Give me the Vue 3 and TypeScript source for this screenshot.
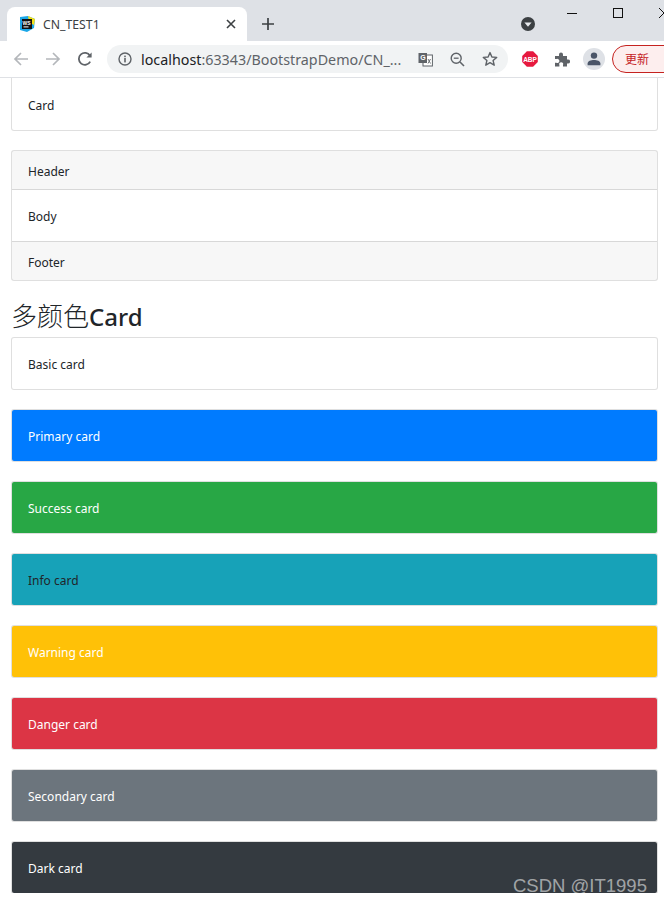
<script setup lang="ts">
const colorCards = [
  { name: 'Primary card', cls: 'primary' },
  { name: 'Success card', cls: 'success' },
  { name: 'Info card', cls: 'info' },
  { name: 'Warning card', cls: 'warning' },
  { name: 'Danger card', cls: 'danger' },
  { name: 'Secondary card', cls: 'secondary' },
  { name: 'Dark card', cls: 'dark' },
]
</script>

<template>
  <div class="shot">
    <header class="chrome">
      <div class="tabstrip">
        <div class="tab">
          <svg class="favicon" width="16" height="16" viewBox="0 0 16 16">
            <path d="M1 1 L9 0 L16 3 L15 12 L8 16 L1 14 Z" fill="#1aa7e8" />
            <path d="M9 0 L16 3 L15 9 L10 6 Z" fill="#f5e11c" />
            <rect x="3" y="3" width="10" height="10" fill="#111" />
            <rect x="4.5" y="10.4" width="5" height="1" fill="#fff" />
            <text x="3.6" y="8.6" class="ws">WS</text>
          </svg>
          <span class="tab-title">CN_TEST1</span>
          <svg class="tab-x" width="10" height="10" viewBox="0 0 10 10">
            <path d="M1 1 L9 9 M9 1 L1 9" stroke="#3c4043" stroke-width="1.6" />
          </svg>
        </div>
        <svg class="plus" width="12" height="12" viewBox="0 0 12 12">
          <path d="M6 0 V12 M0 6 H12" stroke="#3c4043" stroke-width="1.7" />
        </svg>
        <span class="spacer"></span>
        <svg class="media" width="14" height="14" viewBox="0 0 14 14">
          <circle cx="7" cy="7" r="7" fill="#3c4043" />
          <path d="M3.4 5.4 H10.6 L7 9.8 Z" fill="#e8eaed" />
        </svg>
        <div class="winctl">
          <svg width="10" height="10" viewBox="0 0 10 10"><path d="M0 5.5 H10" stroke="#111" /></svg>
          <svg width="10" height="10" viewBox="0 0 10 10"><rect x="0.5" y="0.5" width="9" height="9" fill="none" stroke="#111" /></svg>
          <svg width="10" height="10" viewBox="0 0 10 10"><path d="M0 0 L10 10 M10 0 L0 10" stroke="#111" fill="none" /></svg>
        </div>
      </div>
      <div class="toolbar">
        <svg class="nav" width="16" height="16" viewBox="0 0 16 16">
          <path d="M15 8 H2 M8 2 L2 8 L8 14" fill="none" stroke="#b4b7bb" stroke-width="1.7" />
        </svg>
        <svg class="nav" width="16" height="16" viewBox="0 0 16 16">
          <path d="M1 8 H14 M8 2 L14 8 L8 14" fill="none" stroke="#b4b7bb" stroke-width="1.7" />
        </svg>
        <svg class="nav" width="16" height="16" viewBox="0 0 16 16">
          <path d="M13.2 10.6 A6 6 0 1 1 13 4.8" fill="none" stroke="#5f6368" stroke-width="1.8" />
          <path d="M14.6 1.4 V6.6 H9.4 Z" fill="#5f6368" />
        </svg>
        <div class="omnibox">
          <svg class="omni-info" width="14" height="14" viewBox="0 0 14 14">
            <circle cx="7" cy="7" r="6" fill="none" stroke="#5f6368" stroke-width="1.4" />
            <rect x="6.2" y="6" width="1.6" height="4.4" fill="#5f6368" />
            <rect x="6.2" y="3.6" width="1.6" height="1.6" fill="#5f6368" />
          </svg>
          <span class="url"><span class="host">localhost</span>:63343/BootstrapDemo/CN_...</span>
          <span class="spacer"></span>
          <svg class="omni-translate" width="15" height="15" viewBox="0 0 15 15">
            <rect x="5" y="3" width="9.4" height="11" fill="#fff" stroke="#5f6368" />
            <rect x="0.5" y="1" width="8.5" height="10" fill="#5f6368" />
            <text x="2.2" y="8.4" class="trans">G</text>
            <path d="M10 7 L12.5 11.5 M12.5 7 L10 11.5" stroke="#5f6368" stroke-width="0.9" />
          </svg>
          <svg class="omni-zoom" width="15" height="15" viewBox="0 0 15 15">
            <circle cx="6.2" cy="6.2" r="5" fill="none" stroke="#5f6368" stroke-width="1.4" />
            <path d="M10 10 L14 14" stroke="#5f6368" stroke-width="1.6" />
            <path d="M3.8 6.2 H8.6" stroke="#5f6368" stroke-width="1.3" />
          </svg>
          <svg class="omni-star" width="16" height="16" viewBox="0 0 16 16">
            <path d="M8 1.6 L9.9 6 L14.7 6.4 L11.1 9.5 L12.2 14.2 L8 11.7 L3.8 14.2 L4.9 9.5 L1.3 6.4 L6.1 6 Z" fill="none" stroke="#5f6368" stroke-width="1.4" stroke-linejoin="round" />
          </svg>
        </div>
        <svg class="abp" width="16" height="16" viewBox="0 0 16 16">
          <path d="M4.9 0.2 H11.1 L15.8 4.9 V11.1 L11.1 15.8 H4.9 L0.2 11.1 V4.9 Z" fill="#e6193f" />
          <text x="8" y="10.6" text-anchor="middle" class="abp-t">ABP</text>
        </svg>
        <svg class="puzzle" width="16" height="16" viewBox="0 0 16 16">
          <path d="M1 5 H5 V3.4 A2 2 0 1 1 9 3.4 V5 H13 V8.4 H14 A2.1 2.1 0 1 1 14 12.6 H13 V15.4 H9 V14 A2 2 0 1 0 5.4 14 V15.4 H1 V11.8 H2.4 A2.1 2.1 0 1 0 2.4 8 H1 Z" fill="#5f6368" />
        </svg>
        <div class="avatar">
          <svg width="14" height="14" viewBox="0 0 14 14">
            <circle cx="7" cy="3.6" r="3.2" fill="#4a5568" />
            <path d="M0.6 13.2 V11.6 C0.6 9 4 8 7 8 C10 8 13.4 9 13.4 11.6 V13.2 Z" fill="#4a5568" />
          </svg>
        </div>
        <div class="update">更新</div>
      </div>
    </header>

    <main class="page">
      <div class="card first"><div class="card-body">Card</div></div>
      <div class="card">
        <div class="card-header">Header</div>
        <div class="card-body">Body</div>
        <div class="card-footer">Footer</div>
      </div>
      <h3 class="title">多颜色<span class="title-latin">Card</span></h3>
      <div class="card"><div class="card-body">Basic card</div></div>
      <div v-for="c in colorCards" :key="c.cls" class="card" :class="c.cls">
        <div class="card-body">{{ c.name }}</div>
      </div>
    </main>
    <span class="watermark">CSDN @IT1995</span>
  </div>
</template>

<style>
html, body { margin: 0; background: #fff; }
</style>

<style scoped>
.shot {
  position: relative;
  width: 664px;
  height: 903px;
  overflow: hidden;
  background: #fff;
  font-family: "Noto Sans", "Noto Sans CJK SC", sans-serif;
  color: #212529;
}
.chrome {
  height: 78px;
  display: flex;
  flex-direction: column;
  box-shadow: inset 0 -1px 0 #dfe1e5;
}
.tabstrip {
  height: 41px;
  flex: none;
  background: #dee1e6;
  display: flex;
  align-items: flex-start;
  box-sizing: border-box;
  padding-left: 7px;
}
.tab {
  width: 240px;
  flex: none;
  height: 34px;
  margin-top: 7px;
  background: #fff;
  border-radius: 8px 8px 0 0;
  display: flex;
  align-items: center;
  box-sizing: border-box;
  padding: 0 11px 0 12px;
}
.favicon { flex: none; }
.ws { font: 700 5px "Liberation Sans", sans-serif; fill: #fff; }
.tab-title {
  font-family: "Noto Sans", sans-serif;
  font-size: 12.25px;
  color: #3c4043;
  margin-left: 8px;
  flex: 1;
}
.plus { margin: 18px 0 0 15px; flex: none; }
.spacer { flex: 1; }
.media { margin-top: 17px; flex: none; }
.winctl {
  display: flex;
  gap: 36px;
  flex: none;
  width: 97px;
  margin-top: 8px;
  margin-left: 32px;
}
.winctl svg { flex: none; }
.toolbar {
  height: 36px;
  flex: none;
  display: flex;
  align-items: center;
  background: #fff;
  padding-left: 13px;
}
.nav { margin-right: 16px; flex: none; }
.nav:nth-child(3) { margin-right: 14px; }
.omnibox {
  width: 401px;
  height: 28px;
  flex: none;
  border-radius: 14px;
  background: #f1f3f4;
  display: flex;
  align-items: center;
  box-sizing: border-box;
  padding: 0 10px 0 11px;
}
.omnibox svg { flex: none; }
.url {
  margin-left: 9px;
  font-size: 14.3px;
  color: #5f6368;
  white-space: nowrap;
}
.host { color: #202124; }
.trans { font: 700 7px "Liberation Sans", sans-serif; fill: #fff; }
.omni-zoom { margin-left: 17px; }
.omni-star { margin-left: 17px; }
.abp { margin-left: 14px; flex: none; }
.abp-t { font: 700 6.5px "Liberation Sans", sans-serif; fill: #fff; }
.puzzle { margin-left: 16px; flex: none; }
.avatar {
  width: 22px;
  height: 22px;
  margin-left: 13px;
  flex: none;
  border-radius: 50%;
  background: #dee1e6;
  display: flex;
  align-items: center;
  justify-content: center;
}
.update {
  margin-left: 7px;
  flex: none;
  width: 80px;
  height: 28px;
  box-sizing: border-box;
  border: 1px solid #c5221f;
  border-radius: 14px;
  background: #fdeeee;
  color: #c5221f;
  font: 12px/26px "Noto Sans CJK SC", sans-serif;
  padding-left: 12px;
}
.page {
  height: 815px;
  overflow: hidden;
  box-sizing: border-box;
  padding: 0 6px 0 11px;
}
.card {
  margin-bottom: 19px;
  border: 1px solid rgba(0, 0, 0, 0.125);
  border-radius: 3px;
  background-clip: padding-box;
  font-size: 12px;
  line-height: 18px;
  background-color: #fff;
}
.card.first {
  border-top: none;
  border-top-left-radius: 0;
  border-top-right-radius: 0;
}
.card-body { padding: 18px 16px 15px; }
.first .card-body { padding: 19px 16px 15px; }
.card-header {
  padding: 12px 16px 8px;
  background: rgba(0, 0, 0, 0.03);
  border-bottom: 1px solid rgba(0, 0, 0, 0.125);
}
.card-footer {
  padding: 12px 16px 8px;
  background: rgba(0, 0, 0, 0.03);
  border-top: 1px solid rgba(0, 0, 0, 0.125);
}
.title {
  margin: -1px 0 0;
  height: 38px;
  font-size: 26px;
  line-height: 32px;
  font-weight: 300;
  color: #212529;
  font-family: "Noto Sans CJK SC", "Noto Sans", sans-serif;
}
.title-latin {
  font-family: "Noto Sans", sans-serif;
  font-size: 24px;
  font-weight: 500;
}
.primary { background-color: #007bff; color: #fff; }
.success { background-color: #28a745; color: #fff; }
.info { background-color: #17a2b8; color: #212529; }
.warning { background-color: #ffc107; color: #fff; }
.danger { background-color: #dc3545; color: #fff; }
.secondary { background-color: #6c757d; color: #fff; }
.dark { background-color: #343a40; color: #fff; }
.watermark {
  position: absolute;
  left: 513px;
  top: 875px;
  font: 18.5px/22px "Liberation Sans", sans-serif;
  color: rgba(255, 255, 255, 0.55);
  white-space: nowrap;
}
</style>
